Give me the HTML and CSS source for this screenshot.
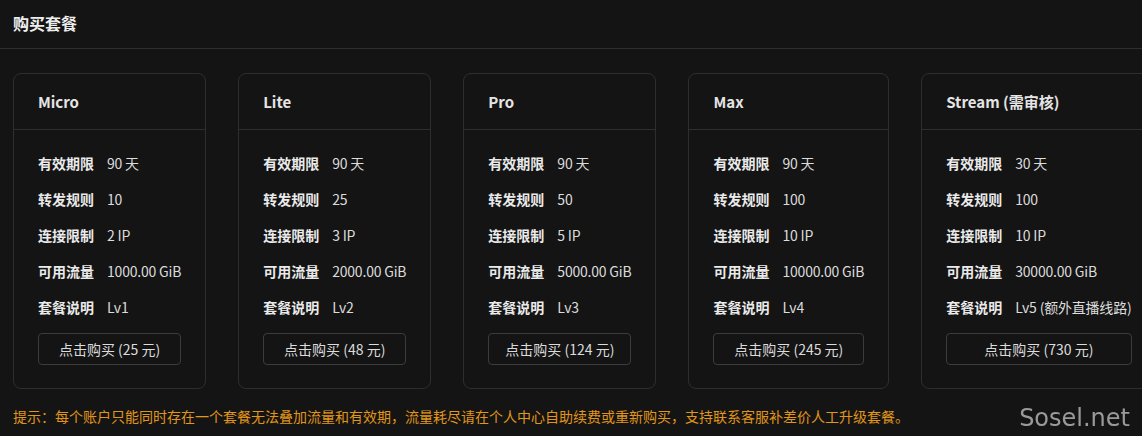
FILE: index.html
```html
<!DOCTYPE html>
<html lang="zh-CN">
<head>
    <meta charset="UTF-8">
    <meta name="viewport" content="width=device-width, initial-scale=1.0">
    <title>购买套餐</title>
    <link rel="stylesheet" href="styles.css">
</head>
<body>
    <div class="page-head">购买套餐</div>

    <div class="plans">
        <div class="plan">
            <div class="plan-title">Micro</div>
            <div class="plan-body">
                <div class="row"><span class="label">有效期限</span><span>90 天</span></div>
                <div class="row"><span class="label">转发规则</span><span>10</span></div>
                <div class="row"><span class="label">连接限制</span><span>2 IP</span></div>
                <div class="row"><span class="label">可用流量</span><span>1000.00 GiB</span></div>
                <div class="row"><span class="label">套餐说明</span><span>Lv1</span></div>
                <button>点击购买 (25 元)</button>
            </div>
        </div>
        <div class="plan">
            <div class="plan-title">Lite</div>
            <div class="plan-body">
                <div class="row"><span class="label">有效期限</span><span>90 天</span></div>
                <div class="row"><span class="label">转发规则</span><span>25</span></div>
                <div class="row"><span class="label">连接限制</span><span>3 IP</span></div>
                <div class="row"><span class="label">可用流量</span><span>2000.00 GiB</span></div>
                <div class="row"><span class="label">套餐说明</span><span>Lv2</span></div>
                <button>点击购买 (48 元)</button>
            </div>
        </div>
        <div class="plan">
            <div class="plan-title">Pro</div>
            <div class="plan-body">
                <div class="row"><span class="label">有效期限</span><span>90 天</span></div>
                <div class="row"><span class="label">转发规则</span><span>50</span></div>
                <div class="row"><span class="label">连接限制</span><span>5 IP</span></div>
                <div class="row"><span class="label">可用流量</span><span>5000.00 GiB</span></div>
                <div class="row"><span class="label">套餐说明</span><span>Lv3</span></div>
                <button>点击购买 (124 元)</button>
            </div>
        </div>
        <div class="plan">
            <div class="plan-title">Max</div>
            <div class="plan-body">
                <div class="row"><span class="label">有效期限</span><span>90 天</span></div>
                <div class="row"><span class="label">转发规则</span><span>100</span></div>
                <div class="row"><span class="label">连接限制</span><span>10 IP</span></div>
                <div class="row"><span class="label">可用流量</span><span>10000.00 GiB</span></div>
                <div class="row"><span class="label">套餐说明</span><span>Lv4</span></div>
                <button>点击购买 (245 元)</button>
            </div>
        </div>
        <div class="plan">
            <div class="plan-title">Stream (需审核)</div>
            <div class="plan-body">
                <div class="row"><span class="label">有效期限</span><span>30 天</span></div>
                <div class="row"><span class="label">转发规则</span><span>100</span></div>
                <div class="row"><span class="label">连接限制</span><span>10 IP</span></div>
                <div class="row"><span class="label">可用流量</span><span>30000.00 GiB</span></div>
                <div class="row"><span class="label">套餐说明</span><span>Lv5 (额外直播线路)</span></div>
                <button>点击购买 (730 元)</button>
            </div>
        </div>
    </div>

    <p class="tip">提示：每个账户只能同时存在一个套餐无法叠加流量和有效期，流量耗尽请在个人中心自助续费或重新购买，支持联系客服补差价人工升级套餐。</p>

    <div class="watermark">Sosel.net</div>
</body>
</html>
```

FILE: styles.css
```css
body {
    margin: 0;
    background-color: #141414;
    color: #e0e0e0;
    font-family: "Noto Sans CJK SC", sans-serif;
    font-size: 14px;
    overflow: hidden;
}
.page-head {
    height: 48px;
    line-height: 46px;
    padding: 0 13px;
    font-size: 16px;
    font-weight: bold;
    color: #eee;
    border-bottom: 1px solid #2e2e2e;
}
.plans {
    display: flex;
    gap: 32px;
    padding: 24px 13px 0;
    overflow: hidden;
}
.plan {
    flex: none;
    border: 1px solid #2e2e2e;
    border-radius: 8px;
}
.plan-title {
    height: 55px;
    line-height: 55px;
    padding: 0 24px;
    font-size: 15px;
    font-weight: bold;
    color: #e5e5e5;
    border-bottom: 1px solid #2e2e2e;
}
.plan-body {
    padding: 15px 24px 23px;
}
.row {
    display: flex;
    gap: 13px;
    height: 36px;
    line-height: 36px;
    white-space: nowrap;
    color: #dcdcdc;
}
.label {
    font-weight: bold;
    color: #eaeaea;
}
.row span:last-child {
    letter-spacing: -0.2px;
}
button {
    display: block;
    width: 100%;
    height: 32px;
    margin-top: 8px;
    background: transparent;
    border: 1px solid #3c3c3c;
    border-radius: 4px;
    color: #dcdcdc;
    font-family: inherit;
    font-size: 14px;
    cursor: pointer;
}
button:hover {
    border-color: #555;
}
.tip {
    margin: 17px 13px 0;
    color: #e0961a;
    font-size: 14px;
}
.watermark {
    position: fixed;
    right: 12px;
    bottom: 4px;
    font-family: "DejaVu Sans", sans-serif;
    font-size: 24px;
    color: #9a9a9a;
}
```
